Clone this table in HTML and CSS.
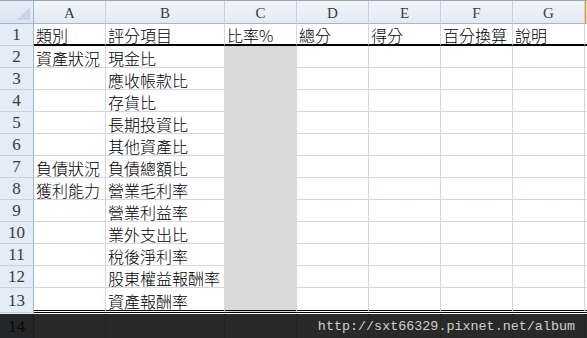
FILE: index.html
```html
<!DOCTYPE html>
<html lang="zh-Hant">
<head>
<meta charset="utf-8">
<title>評分表</title>
<link rel="stylesheet" href="styles.css">
</head>
<body>
<div class="sheet">
  <div class="grid">
    <div class="corner"><span class="tri"></span></div>
    <div class="ch">A</div><div class="ch">B</div><div class="ch">C</div><div class="ch">D</div><div class="ch">E</div><div class="ch">F</div><div class="ch">G</div><div class="ch sel"></div>

    <div class="rh r1">1</div>
    <div class="c r1">類別</div><div class="c r1">評分項目</div><div class="c r1">比率%</div><div class="c r1">總分</div><div class="c r1">得分</div><div class="c r1">百分換算</div><div class="c r1">說明</div><div class="c r1 last"></div>

    <div class="rh">2</div>
    <div class="c">資產狀況</div><div class="c">現金比</div><div class="c fill"></div><div class="c"></div><div class="c"></div><div class="c"></div><div class="c"></div><div class="c last"></div>

    <div class="rh">3</div>
    <div class="c"></div><div class="c">應收帳款比</div><div class="c fill"></div><div class="c"></div><div class="c"></div><div class="c"></div><div class="c"></div><div class="c last"></div>

    <div class="rh">4</div>
    <div class="c"></div><div class="c">存貨比</div><div class="c fill"></div><div class="c"></div><div class="c"></div><div class="c"></div><div class="c"></div><div class="c last"></div>

    <div class="rh">5</div>
    <div class="c"></div><div class="c">長期投資比</div><div class="c fill"></div><div class="c"></div><div class="c"></div><div class="c"></div><div class="c"></div><div class="c last"></div>

    <div class="rh">6</div>
    <div class="c"></div><div class="c">其他資產比</div><div class="c fill"></div><div class="c"></div><div class="c"></div><div class="c"></div><div class="c"></div><div class="c last"></div>

    <div class="rh">7</div>
    <div class="c">負債狀況</div><div class="c">負債總額比</div><div class="c fill"></div><div class="c"></div><div class="c"></div><div class="c"></div><div class="c"></div><div class="c last"></div>

    <div class="rh">8</div>
    <div class="c">獲利能力</div><div class="c">營業毛利率</div><div class="c fill"></div><div class="c"></div><div class="c"></div><div class="c"></div><div class="c"></div><div class="c last"></div>

    <div class="rh">9</div>
    <div class="c"></div><div class="c">營業利益率</div><div class="c fill"></div><div class="c"></div><div class="c"></div><div class="c"></div><div class="c"></div><div class="c last"></div>

    <div class="rh">10</div>
    <div class="c"></div><div class="c">業外支出比</div><div class="c fill"></div><div class="c"></div><div class="c"></div><div class="c"></div><div class="c"></div><div class="c last"></div>

    <div class="rh">11</div>
    <div class="c"></div><div class="c">稅後淨利率</div><div class="c fill"></div><div class="c"></div><div class="c"></div><div class="c"></div><div class="c"></div><div class="c last"></div>

    <div class="rh">12</div>
    <div class="c"></div><div class="c">股東權益報酬率</div><div class="c fill"></div><div class="c"></div><div class="c"></div><div class="c"></div><div class="c"></div><div class="c last"></div>

    <div class="rh r13">13</div>
    <div class="c r13"></div><div class="c r13">資產報酬率</div><div class="c r13 fill"></div><div class="c r13"></div><div class="c r13"></div><div class="c r13"></div><div class="c r13"></div><div class="c r13 last"></div>

    <div class="rh r14">14</div>
    <div class="c r14"></div><div class="c r14"></div><div class="c r14"></div><div class="c r14"></div><div class="c r14"></div><div class="c r14"></div><div class="c r14"></div><div class="c r14 last"></div>
  </div>
  <div class="watermark">http://sxt66329.pixnet.net/album</div>
</div>
</body>
</html>
```

FILE: styles.css
```css
html, body {
  margin: 0;
  padding: 0;
  background: #ffffff;
  overflow: hidden;
}

.sheet {
  position: relative;
  width: 587px;
  height: 338px;
  overflow: hidden;
  border-top: 1px solid #9ba7b6;
  box-sizing: border-box;
}

.grid {
  display: grid;
  grid-template-columns: 34px 72px 119px 72px 72px 72px 72px 72px 1fr;
  grid-template-rows: 23px 22px repeat(11, 22px) 25px 26px;
}

.grid > div {
  box-sizing: border-box;
}

.corner {
  position: relative;
  background: linear-gradient(#e6edf6, #dbe5f1);
  border-right: 1px solid #9eb6ce;
  border-bottom: 1px solid #9eb6ce;
}

.tri {
  position: absolute;
  right: 3px;
  bottom: 3px;
  width: 0;
  height: 0;
  border-left: 13px solid transparent;
  border-bottom: 13px solid #c6d4e6;
}

.ch {
  display: flex;
  align-items: center;
  justify-content: center;
  background: linear-gradient(#f1f5fa, #e3eaf3);
  border-right: 1px solid #c5d2e1;
  border-bottom: 1px solid #9eb6ce;
  font-family: "Liberation Serif", serif;
  font-size: 15px;
  color: #3a3a3a;
  padding-top: 2px;
}

.ch.sel {
  background: linear-gradient(#fbe3b4, #f8d49a);
  border-left: 1px solid #f29436;
  border-right: none;
}

.rh {
  display: flex;
  align-items: center;
  justify-content: center;
  background: #e4ecf7;
  border-right: 1px solid #9eb6ce;
  border-bottom: 1px solid #c5d2e1;
  font-family: "Liberation Serif", serif;
  font-size: 17px;
  color: #3a3a3a;
  padding-top: 1px;
}

.c {
  display: flex;
  align-items: flex-end;
  padding: 0 0 1px 2px;
  border-right: 1px solid #d0d7e5;
  border-bottom: 1px solid #d0d7e5;
  font-family: "Noto Sans CJK TC", "Noto Sans CJK SC", sans-serif;
  font-weight: 300;
  font-size: 16px;
  line-height: 16px;
  color: #000000;
  white-space: nowrap;
  overflow: visible;
}

.c.last {
  border-right: none;
}

.c.fill {
  background: #d9d9d9;
  border-right-color: #d9d9d9;
  border-bottom-color: #d9d9d9;
}

.c.r1 {
  border-bottom: 2px solid #000000;
  padding-bottom: 1px;
}

.c.r13 {
  border-bottom: 3px double #000000;
  padding-bottom: 1px;
}

.c.r14, .rh.r14 {
  border-bottom: none;
}

.watermark {
  position: absolute;
  left: 0;
  right: 0;
  bottom: 0;
  height: 24px;
  display: flex;
  align-items: center;
  justify-content: flex-end;
  padding-right: 12px;
  background: rgba(0, 0, 0, 0.84);
  font-family: "Liberation Mono", monospace;
  font-size: 13.4px;
  color: #cfcfcf;
}
```
